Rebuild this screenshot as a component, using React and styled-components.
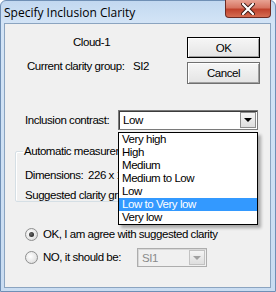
import React from "react";
import styled, { createGlobalStyle } from "styled-components";

const Global = createGlobalStyle`
  html, body { margin: 0; padding: 0; background: #ffffff; }
  #root { width: 276px; height: 292px; }
`;

const FONT = `"Liberation Sans", Arial, sans-serif`;

const Window = styled.div`
  width: 276px;
  height: 292px;
  box-sizing: border-box;
  display: flex;
  flex-direction: column;
  background: linear-gradient(180deg, #c2d8f0 0px, #d3e4f6 22px, #c9dcf1 100%);
  border: 1px solid #6f8fb5;
  border-radius: 6px 6px 0 0;
  font-family: ${FONT};
  color: #000;
`;

const TitleBar = styled.div`
  height: 22px;
  display: flex;
  align-items: flex-start;
  justify-content: space-between;
  padding: 0 4px 0 3px;
`;

const Title = styled.div`
  font-family: "Open Sans", "Noto Sans", sans-serif;
  font-size: 12px;
  line-height: 16px;
  margin-top: 4px;
  color: #000;
`;

const CloseButton = styled.div`
  width: 46px;
  height: 18px;
  margin-top: -1px;
  box-sizing: border-box;
  border: 1px solid #6b2a22;
  border-top: none;
  border-radius: 0 0 4px 4px;
  background: linear-gradient(180deg, #e8a394 0%, #d77562 45%, #c0422c 55%, #d56d52 100%);
  display: flex;
  align-items: center;
  justify-content: center;
`;

const Client = styled.div`
  flex: 1;
  margin: 0 4px 3px 3px;
  background: #f0f0f0;
  border: 1px solid #8ba4c0;
  position: relative;
  padding: 11px 0 0 0;
  font-size: 11.5px;
  letter-spacing: -0.45px;
`;

const TopSection = styled.div`
  display: flex;
  justify-content: space-between;
  padding-right: 10px;
`;

const InfoColumn = styled.div`
  display: flex;
  flex-direction: column;
`;

const Label = styled.div`
  line-height: 15px;
  white-space: nowrap;
  padding-left: ${(p) => p.$indent || 0}px;
  margin-top: ${(p) => p.$top || 0}px;
  width: ${(p) => (p.$w ? `${p.$w}px` : "auto")};
  flex-shrink: 0;
`;

const Field = styled.span`
  display: inline-block;
  width: ${(p) => p.$w}px;
`;

const ButtonColumn = styled.div`
  display: flex;
  flex-direction: column;
  gap: 4px;
  margin-top: 2px;
`;

const PushButton = styled.div`
  width: 73px;
  height: ${(p) => (p.$default ? 21 : 22)}px;
  box-sizing: border-box;
  background: linear-gradient(180deg, #f6f6f6, #e4e4e4);
  border: 1px solid ${(p) => (p.$default ? "#000" : "#707070")};
  box-shadow: inset 1px 1px 0 #fff, inset -1px -1px 0 #a0a0a0;
  display: flex;
  align-items: center;
  justify-content: center;
`;

const ContrastRow = styled.div`
  display: flex;
  align-items: center;
  margin-top: 26px;
  padding-left: 20px;
`;

const ComboWrap = styled.div`
  position: relative;
`;

const Combo = styled.div`
  width: ${(p) => p.$w}px;
  height: ${(p) => p.$h}px;
  box-sizing: border-box;
  border: 1px solid ${(p) => (p.$disabled ? "#adadad" : "#7a7a7a")};
  box-shadow: inset 1px 1px 0 ${(p) => (p.$disabled ? "#d8d8d8" : "#3c3c3c")};
  background: ${(p) => (p.$disabled ? "#f0f0f0" : "#fff")};
  display: flex;
  align-items: center;
  justify-content: space-between;
  padding: 0 1px 0 4px;
  color: ${(p) => (p.$disabled ? "#8a8a8a" : "#000")};
`;

const ArrowBtn = styled.div`
  width: 16px;
  height: ${(p) => p.$h}px;
  box-sizing: border-box;
  border: 1px solid ${(p) => (p.$disabled ? "#c2c2c2" : "#8c8c8c")};
  background: linear-gradient(180deg, #f4f4f4, #dedede);
  display: flex;
  align-items: center;
  justify-content: center;
`;

const Arrow = styled.div`
  width: 0;
  height: 0;
  border-left: 4px solid transparent;
  border-right: 4px solid transparent;
  border-top: 4px solid ${(p) => (p.$disabled ? "#a0a0a0" : "#000")};
`;

const DropList = styled.div`
  position: absolute;
  left: 0;
  top: 22px;
  width: 140px;
  box-sizing: border-box;
  border: 1px solid #000;
  background: #fff;
  box-shadow: 3px 3px 3px rgba(0, 0, 0, 0.3);
  z-index: 10;
`;

const Item = styled.div`
  height: 13px;
  line-height: 13px;
  padding-left: 3px;
  white-space: nowrap;
  background: ${(p) => (p.$selected ? "#3399ff" : "transparent")};
  color: ${(p) => (p.$selected ? "#fff" : "#000")};
`;

const GroupBox = styled.fieldset`
  margin: 15px 0 0 10px;
  width: 243px;
  height: 57px;
  box-sizing: border-box;
  border: 1px solid #d5dfe5;
  box-shadow: inset 1px 1px 0 #fff;
  border-radius: 2px;
  padding: 4px 0 0 9px;
`;

const Legend = styled.legend`
  padding: 0 1px;
  margin-left: -2px;
  line-height: 13px;
`;

const GroupLine = styled.div`
  line-height: 15px;
  white-space: nowrap;
  margin-top: ${(p) => p.$top || 0}px;
`;

const RadioList = styled.div`
  display: flex;
  flex-direction: column;
  margin-top: 23px;
  padding-left: 20px;
  gap: 4px;
`;

const RadioRow = styled.div`
  display: flex;
  align-items: center;
  height: 19px;
`;

const RadioCircle = styled.div`
  width: 13px;
  height: 13px;
  box-sizing: border-box;
  border-radius: 50%;
  border: 1px solid #8e8f8f;
  background: radial-gradient(circle at 40% 40%, #ffffff 0%, #e6e6e6 60%, #cfcfcf 100%);
  display: flex;
  align-items: center;
  justify-content: center;
  margin-right: 5px;
  flex-shrink: 0;
`;

const RadioDot = styled.div`
  width: 5px;
  height: 5px;
  border-radius: 50%;
  background: radial-gradient(circle at 40% 40%, #6a6a6a, #111);
`;

const RadioText = styled.span`
  line-height: 15px;
  white-space: nowrap;
  width: ${(p) => (p.$w ? `${p.$w}px` : "auto")};
  flex-shrink: 0;
`;

const items = ["Very high", "High", "Medium", "Medium to Low", "Low", "Low to Very low", "Very low"];

export default function App() {
  return (
    <>
      <Global />
      <Window>
        <TitleBar>
          <Title>Specify Inclusion Clarity</Title>
          <CloseButton>
            <svg width="14" height="12" viewBox="0 0 14 12">
              <path d="M2 1 L12 11 M12 1 L2 11" stroke="#3a1a14" strokeWidth="4" strokeLinecap="round" />
              <path d="M2 1 L12 11 M12 1 L2 11" stroke="#ffffff" strokeWidth="2.2" strokeLinecap="round" />
            </svg>
          </CloseButton>
        </TitleBar>
        <Client>
          <TopSection>
            <InfoColumn>
              <Label $indent={68}>Cloud-1</Label>
              <Label $indent={22} $top={9}>
                <Field $w={106}>Current clarity group:</Field>SI2
              </Label>
            </InfoColumn>
            <ButtonColumn>
              <PushButton $default>OK</PushButton>
              <PushButton>Cancel</PushButton>
            </ButtonColumn>
          </TopSection>

          <ContrastRow>
            <Label $w={93}>Inclusion contrast:</Label>
            <ComboWrap>
              <Combo $w={140} $h={20}>
                <span>Low</span>
                <ArrowBtn $h={16}>
                  <Arrow />
                </ArrowBtn>
              </Combo>
              <DropList>
                {items.map((t) => (
                  <Item key={t} $selected={t === "Low to Very low"}>
                    {t}
                  </Item>
                ))}
              </DropList>
            </ComboWrap>
          </ContrastRow>

          <GroupBox>
            <Legend>Automatic measurement</Legend>
            <GroupLine $top={6}>
              <Field $w={63}>Dimensions:</Field>226 x 174 mkm
            </GroupLine>
            <GroupLine $top={5}>
              <Field $w={130}>Suggested clarity group:</Field>SI1
            </GroupLine>
          </GroupBox>

          <RadioList>
            <RadioRow>
              <RadioCircle>
                <RadioDot />
              </RadioCircle>
              <RadioText>OK, I am agree with suggested clarity</RadioText>
            </RadioRow>
            <RadioRow>
              <RadioCircle />
              <RadioText $w={94}>NO, it should be:</RadioText>
              <ComboWrap>
                <Combo $w={70} $h={19} $disabled>
                  <span>SI1</span>
                  <ArrowBtn $h={15} $disabled>
                    <Arrow $disabled />
                  </ArrowBtn>
                </Combo>
              </ComboWrap>
            </RadioRow>
          </RadioList>
        </Client>
      </Window>
    </>
  );
}
